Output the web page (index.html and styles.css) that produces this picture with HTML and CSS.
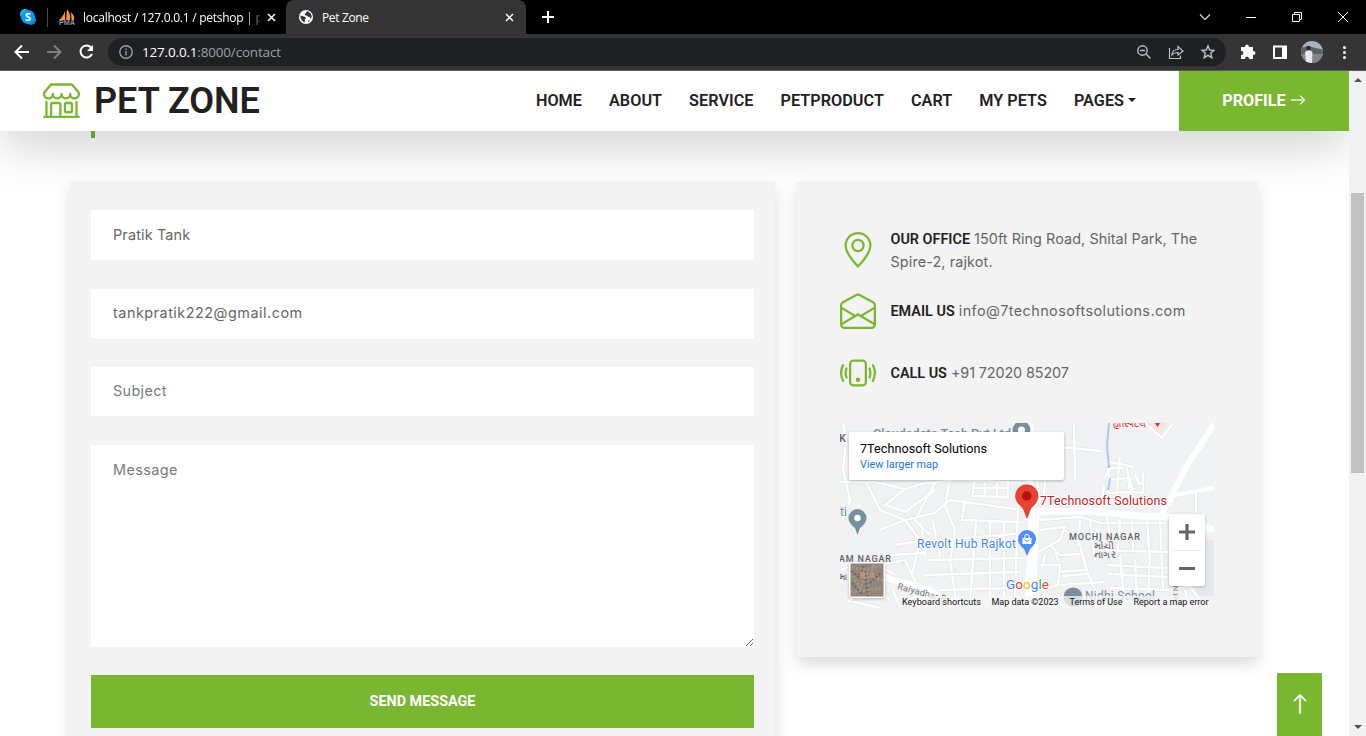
FILE: index.html
```html
<!DOCTYPE html>
<html lang="en">
<head>
<meta charset="utf-8">
<title>Pet Zone</title>
<link rel="stylesheet" href="styles.css">
</head>
<body>
<div class="tabs">
  <svg class="skype" viewBox="0 0 16 16"><circle cx="5" cy="5" r="5" fill="#1bb2f5"/><circle cx="11" cy="11" r="5" fill="#0a7fe0"/><circle cx="8" cy="8" r="7" fill="#0c9bea"/><text x="8" y="12" text-anchor="middle" font-size="11" font-weight="700" font-family="Open Sans, sans-serif" fill="#fff">S</text></svg>
  <i class="tab-sep"></i>
  <div class="tab tab-back">
    <svg width="18" height="17" viewBox="0 0 18 17"><path d="M7 2 7 11 1 11Q5 8 7 2ZM9 0Q13 5 12 11L8 11ZM13 3Q17 7 16 11L13.500 11Z" fill="#f29a25"/><text x="1" y="16" font-size="7" font-weight="700" font-family="Liberation Sans, sans-serif" fill="#8d8fb3" textLength="16" lengthAdjust="spacingAndGlyphs">PMA</text></svg>
    <span class="tab-title">localhost / 127.0.0.1 / petshop | p</span>
    <svg class="x" width="9" height="9" viewBox="0 0 9 9"><path d="M1 1 8 8M8 1 1 8" stroke="#fff" stroke-width="1.5"/></svg>
  </div>
  <div class="tab tab-on">
    <svg width="14" height="14" viewBox="0 0 14 14"><circle cx="7" cy="7" r="7" fill="#fff"/><path d="M1.2 5.5 5 6.6Q7 7 7 8.5L5.8 9.2 5.8 12.4Q1.5 11 1.2 5.5ZM7.5 1.3Q7.8 3.5 5.5 3.8 5.3 5.7 8 5.7 9 7 10.5 7L12 9Q14.2 4 9 1.4ZM9 12.7 9.5 10.5 11 10.2Z" fill="#35363a"/></svg>
    <span class="tab-title">Pet Zone</span>
    <svg class="x" width="9" height="9" viewBox="0 0 9 9"><path d="M1 1 8 8M8 1 1 8" stroke="#fff" stroke-width="1.5"/></svg>
  </div>
  <svg class="plus" width="12" height="12" viewBox="0 0 12 12"><path d="M6 0V12M0 6H12" stroke="#fff" stroke-width="2"/></svg>
  <svg class="win" width="152" height="14" viewBox="1198 7 152 14" fill="none" stroke="#fff"><path d="M1200 11.500 1205 16.500 1210 11.500" stroke="#ddd" stroke-width="1.200"/><path d="M1246 14.500H1256M1292.500 11.500H1299.500V18.500H1292.500ZM1294.500 11.500V9.500H1301.500V16.500H1299.500M1338 9 1348 19M1348 9 1338 19"/></svg>
</div>
<div class="toolbar">
  <svg width="82" height="16" viewBox="14 44 82 16" fill="none" stroke-width="2"><path d="M29 52H16M22 45.500 15.500 52 22 58.500" stroke="#fff"/><path d="M47 52H60M54 45.500 60.500 52 54 58.500" stroke="#7f7f80"/><path d="M91 47.500A6 6 0 1 0 92 54" stroke="#fff"/><path d="M93 45V51H87Z" fill="#fff"/></svg>
  <div class="omnibox">
    <svg width="14" height="14" viewBox="0 0 14 14" fill="none" stroke="#9aa0a6" stroke-width="1.400"><circle cx="7" cy="7" r="6.200"/><path d="M7 6V10.500M7 3.500V5"/></svg>
    <span class="url"><b>127.0.0.1</b>:8000/contact</span>
    <svg class="omni-icons" width="78" height="16" viewBox="1137 44 78 16" fill="none" stroke="#bdc1c6" stroke-width="1.400"><circle cx="1142.500" cy="50.500" r="4.700"/><path d="M1140 50.500H1145M1146 54 1150.500 58.500"/><path d="M1169.500 48V58.500H1180.500V55.500M1172 55Q1172 49.500 1178 49.500V46.500L1183 51 1178 55V52.500Q1174 52.500 1172 55Z" stroke-width="1.200"/><path d="M1208 45.800 1209.700 50 1214 50.300 1210.700 53.200 1211.800 57.700 1208 55.300 1204.200 57.700 1205.300 53.200 1202 50.300 1206.300 50Z"/></svg>
  </div>
  <svg class="ext" width="112" height="24" viewBox="1240 40 112 24"><path d="M1241 47H1245Q1245 44.500 1247 44.500T1249 47H1253V51Q1255.500 51 1255.500 53T1253 55V59H1249.200Q1249 56.500 1247 56.500T1244.800 59H1241V55.200Q1243.500 55 1243.500 53T1241 50.800Z" fill="#fff"/><path d="M1274 46.500H1286V58H1274Z" fill="none" stroke="#fff" stroke-width="2"/><path d="M1282 46H1287V59H1282Z" fill="#fff"/><clipPath id="av"><circle cx="1312" cy="52" r="11"/></clipPath><g clip-path="url(#av)"><path d="M1300 40H1324V64H1300Z" fill="#a7b4c4"/><path d="M1300 48 1308 46 1324 50V54H1300Z" fill="#53695c"/><path d="M1300 54H1324V64H1300Z" fill="#85858a"/><path d="M1305 52Q1309 48.500 1312.500 52L1312 63H1306Z" fill="#e9e4f0"/><circle cx="1308.500" cy="48" r="2.300" fill="#2a2634"/></g><g fill="#fff"><circle cx="1344.500" cy="47.500" r="1.500"/><circle cx="1344.500" cy="52.500" r="1.500"/><circle cx="1344.500" cy="57.500" r="1.500"/></g></svg>
</div>
<div class="viewport">
  <div class="page">
    <nav class="navbar">
      <svg class="shop" viewBox="0 0 16 16"><path d="M2.970 1.350A1 1 0 0 1 3.730 1h8.540a1 1 0 0 1 .76.35l2.609 3.044A1.500 1.500 0 0 1 16 5.370v.255a2.375 2.375 0 0 1-4.250 1.458A2.371 2.371 0 0 1 9.875 8 2.370 2.370 0 0 1 8 7.083 2.370 2.370 0 0 1 6.125 8a2.370 2.370 0 0 1-1.875-.917A2.375 2.375 0 0 1 0 5.625V5.370a1.500 1.500 0 0 1 .361-.976l2.610-3.045zm1.780 4.275a1.375 1.375 0 0 0 2.750 0 .5.5 0 0 1 1 0 1.375 1.375 0 0 0 2.750 0 .5.5 0 0 1 1 0 1.375 1.375 0 1 0 2.750 0V5.370a.5.5 0 0 0-.12-.325L12.270 2H3.730L1.120 5.045A.5.5 0 0 0 1 5.370v.255a1.375 1.375 0 0 0 2.750 0 .5.5 0 0 1 1 0zM1.500 8.500A.5.5 0 0 1 2 9v6h1v-5a1 1 0 0 1 1-1h3a1 1 0 0 1 1 1v5h6V9a.5.5 0 0 1 1 0v6h.5a.5.5 0 0 1 0 1H.5a.5.5 0 0 1 0-1H1V9a.5.5 0 0 1 .5-.5zM4 15h3v-5H4v5zm5-5a1 1 0 0 1 1-1h2a1 1 0 0 1 1 1v3a1 1 0 0 1-1 1h-2a1 1 0 0 1-1-1v-3zm3 0h-2v3h2v-3z"/></svg>
      <h1>PET ZONE</h1>
      <div class="links"><a>HOME</a><a>ABOUT</a><a>SERVICE</a><a>PETPRODUCT</a><a>CART</a><a>MY PETS</a><a class="drop">PAGES</a></div>
      <a class="profile">PROFILE <svg width="16" height="16" viewBox="0 0 16 16"><path d="M1 8a.5.5 0 0 1 .5-.5h11.793l-3.147-3.146a.5.5 0 0 1 .708-.708l4 4a.5.5 0 0 1 0 .708l-4 4a.5.5 0 0 1-.708-.708L13.293 8.500H1.500A.5.5 0 0 1 1 8z" stroke="#fff" stroke-width=".3"/></svg></a>
    </nav>
    <div class="heading-rule"></div>
    <main class="cols">
      <form class="card form">
        <input type="text" value="Pratik Tank" class="in-name">
        <input type="text" value="tankpratik222@gmail.com" class="in-mail">
        <input type="text" placeholder="Subject" class="in-subject">
        <textarea placeholder="Message"></textarea>
        <button type="button">SEND MESSAGE</button>
      </form>
      <aside class="card info">
        <div class="row row-office">
          <svg class="ico" viewBox="0 0 16 16"><path d="M12.166 8.940c-.524 1.062-1.234 2.120-1.960 3.070A31.493 31.493 0 0 1 8 14.580a31.481 31.481 0 0 1-2.206-2.570c-.726-.95-1.436-2.008-1.960-3.070C3.304 7.867 3 6.862 3 6a5 5 0 0 1 10 0c0 .862-.305 1.867-.834 2.940zM8 16s6-5.686 6-10A6 6 0 0 0 2 6c0 4.314 6 10 6 10z"/><path d="M8 8a2 2 0 1 1 0-4 2 2 0 0 1 0 4zm0 1a3 3 0 1 0 0-6 3 3 0 0 0 0 6z"/></svg>
          <p><b>OUR OFFICE</b> <span class="t-addr">150ft Ring Road, Shital Park, The</span><br><span class="t-addr2">Spire-2, rajkot.</span></p>
        </div>
        <div class="row row-mail">
          <svg class="ico" viewBox="0 0 16 16"><path d="M8.470 1.318a1 1 0 0 0-.94 0l-6 3.200A1 1 0 0 0 1 5.400v.817l5.750 3.450L8 8.917l1.250.75L15 6.217V5.400a1 1 0 0 0-.53-.882l-6-3.200ZM15 7.383l-4.778 2.867L15 13.117V7.383Zm-.035 6.880L8 10.082l-6.965 4.180A1 1 0 0 0 2 15h12a1 1 0 0 0 .965-.738ZM1 13.116l4.778-2.867L1 7.383v5.734ZM7.059.435a2 2 0 0 1 1.882 0l6 3.200A2 2 0 0 1 16 5.400V14a2 2 0 0 1-2 2H2a2 2 0 0 1-2-2V5.400a2 2 0 0 1 1.059-1.765l6-3.200Z"/></svg>
          <p><b>EMAIL US</b> <span class="t-mail">info@7technosoftsolutions.com</span></p>
        </div>
        <div class="row row-call">
          <svg class="ico" viewBox="0 0 16 16"><path d="M10 3a1 1 0 0 1 1 1v8a1 1 0 0 1-1 1H6a1 1 0 0 1-1-1V4a1 1 0 0 1 1-1h4zM6 2a2 2 0 0 0-2 2v8a2 2 0 0 0 2 2h4a2 2 0 0 0 2-2V4a2 2 0 0 0-2-2H6z"/><path d="M8 12a1 1 0 1 0 0-2 1 1 0 0 0 0 2zM1.599 4.058a.5.5 0 0 1 .208.676A6.967 6.967 0 0 0 1 8c0 1.180.292 2.292.807 3.266a.5.5 0 0 1-.884.468A7.968 7.968 0 0 1 0 8c0-1.347.334-2.619.923-3.734a.5.5 0 0 1 .676-.208zm12.802 0a.5.5 0 0 1 .676.208A7.967 7.967 0 0 1 16 8a7.967 7.967 0 0 1-.923 3.734.5.5 0 0 1-.884-.468A6.967 6.967 0 0 0 15 8c0-1.180-.292-2.292-.807-3.266a.5.5 0 0 1 .208-.676zM3.057 5.534a.5.5 0 0 1 .284.648A4.986 4.986 0 0 0 3 8c0 .642.12 1.255.34 1.818a.5.5 0 1 1-.93.364A5.986 5.986 0 0 1 2 8c0-.769.145-1.505.41-2.182a.5.5 0 0 1 .647-.284zm9.886 0a.5.5 0 0 1 .648.284C13.855 6.495 14 7.231 14 8c0 .769-.145 1.505-.41 2.182a.5.5 0 0 1-.93-.364C12.880 9.255 13 8.642 13 8c0-.642-.12-1.255-.34-1.818a.5.5 0 0 1 .283-.648z"/></svg>
          <p><b>CALL US</b> <span class="t-call">+91 72020 85207</span></p>
        </div>
        <svg class="map" width="374" height="185" viewBox="840 423 374 185" font-family="Roboto, sans-serif">
          <rect x="840" y="423" width="374" height="185" fill="#f0f1f3"/>
          <path d="M1190 540H1214V608H1198Z" fill="#e6e7ec"/>
          <path d="M1146 423 1168 423 1160 435Z" fill="#fce4e4"/>
          <g fill="none" stroke="#dfe1e5" stroke-width="3.400"><use href="#lanes"/></g>
          <g fill="none" stroke="#fff" stroke-width="2.400"><path id="lanes" d="M843 423 846 440 843 470 850 500 842 520M840 482 875 482 905 489 925 483 960 480 1030 483M866 482 880 510 905 520 920 540 912 575M905 489 885 505 905 512 935 490M880 530 905 520 935 513 950 500 1030 511M935 483 915 520 930 535M950 480 945 505 955 530 950 560 957 608M975 480 972 496 1008 497 1008 480M985 483V496M997 483V496M972 488H1008M965 500 962 520 1020 522M976 522 970 600M990 522V600M1004 522V600M1018 505 1015 600M945 540 1025 533M930 560 1025 558M925 575 1020 572M940 590 1020 588M880 565 905 560 912 575 925 600 945 608M895 545 925 540M890 555 925 553M850 600 870 585 890 600M840 570 870 560 895 575M921 523 925 557M933 522 940 556M846 600 880 608M893 590 900 608M1074 423 1075 480M1060 447 1101 451M1104 480 1109 468 1123 468M1120 454 1117 490M1109 468 1108 493 1133 492 1143 493V473M1107 480 1128 478M1130 477 1133 492M1135 474 1139 484 1143 483M1110 462 1134 467M1127 468 1130 492M1037 480 1040 500M1045 480 1043 508M1104 485 1101 510M1145 423 1162 438 1173 423M1168 500 1184 493 1196 493V513M1171 507 1174 495M1038 520 1080 517 1100 523 1165 523M1040 530 1065 527 1060 540 1038 552M1045 555 1042 568M1055 550 1058 560M1040 565 1060 565 1058 585 1040 590M1065 530 1080 545 1086 570 1058 572M1080 520 1078 545M1090 520 1095 560M1107 518 1112 550M1120 520 1118 550M1132 520 1133 550M1147 520 1150 560M1160 520 1163 590M1050 545 1060 555 1083 554 1088 574 1062 576M1100 550 1170 552M1107 565 1166 568M1109 574 1168 577M1088 574 1100 600M1120 555 1124 600M1135 560 1137 600M1150 556 1148 600M1060 585 1105 582M1045 590 1042 608M1110 588 1169 590M1170 590 1190 586 1200 600M1185 590 1190 608"/></g>
          <g fill="none" stroke="#fff"><path d="M1030 423V515" stroke-width="7"/><path d="M1034 510 1030 608" stroke-width="11"/><path d="M1025 512 1090 511 1140 516 1170 517 1214 530" stroke-width="7"/><path d="M1160 517 1188 464 1214 424" stroke-width="6"/><path d="M1170 496 1214 488" stroke-width="4"/><path d="M880 576 930 590 950 605" stroke-width="6"/></g>
          <path d="M1109 423 1107 445 1109 468M1110 478 1108 490" fill="none" stroke="#a9c8f5" stroke-width="2"/>
          <g fill="#78909c"><text x="873" y="438" font-size="12.500" font-weight="500" textLength="138">Cloudedata Tech Pvt Ltd</text><text x="840" y="516" font-size="12">ti</text><text x="1085" y="600" font-size="12" textLength="70">Nidhi School</text></g>
          <g fill="#5f6368" font-weight="500"><text x="839" y="442" font-size="11">K</text><text x="839" y="562" font-size="9" textLength="52">AM NAGAR</text><text x="1069" y="540" font-size="9" textLength="71">MOCHI NAGAR</text><text x="1094" y="549" font-size="9" textLength="20" lengthAdjust="spacingAndGlyphs">મોચી</text><text x="1094" y="558" font-size="9" textLength="22" lengthAdjust="spacingAndGlyphs">નાગર</text><text x="839" y="580" font-size="9">મા</text></g>
          <text x="1113" y="427" font-size="10" fill="#d93025" textLength="33" lengthAdjust="spacingAndGlyphs">હોસ્પિટલ</text><path d="M1155 423h5l-2.500 4Z" fill="#d93025"/>
          <text x="897" y="589" font-size="9" fill="#70757a" transform="rotate(15 897 589)" textLength="50">Raiyadhar R</text>
          <text x="0" y="0" font-size="8" fill="#80868b" transform="translate(1178 600) rotate(-90)">et N</text>
          <g fill="#78909c"><circle cx="1021.500" cy="430" r="9"/><circle cx="1073" cy="597" r="9.500"/><path d="M848.500 518A9 9 0 1 1 866.500 518Q866.500 523 860 528L857.500 535 855 528Q848.500 523 848.500 518Z"/></g><g fill="#fff"><circle cx="1021.500" cy="430" r="3.500"/><circle cx="857.500" cy="518" r="3.200"/></g>
          <path d="M1015.500 496A11 11 0 0 1 1038 496Q1038 502 1031 508L1027 518 1023 508Q1015.500 502 1015.500 496Z" fill="#ea4335" stroke="#c5221f" stroke-width=".6"/><circle cx="1026.700" cy="496" r="4.700" fill="#b31412"/>
          <path d="M1018 539A9 9 0 0 1 1036 539Q1036 544 1030 549L1027 556 1024 549Q1018 544 1018 539Z" fill="#4f90f5"/><path d="M1022.500 538H1031.500V544H1022.500Z" fill="#fff"/><path d="M1024.800 538V536.500A2.200 2.200 0 0 1 1029.200 536.500V538" fill="none" stroke="#fff"/><path d="M1024.500 539.500Q1027 543 1029.500 539.500" fill="none" stroke="#4f90f5"/>
          <text x="1040" y="505" font-size="12.500" fill="#c5221f" stroke="#fff" stroke-width="2" paint-order="stroke" textLength="127">7Technosoft Solutions</text>
          <text x="917" y="548" font-size="12" fill="#4285f4" stroke="#fff" stroke-width="2" paint-order="stroke" textLength="99">Revolt Hub Rajkot</text>
          <rect x="898" y="596" width="316" height="12" fill="#f5f5f5" opacity=".75"/>
          <g class="lift"><rect x="849" y="432" width="215" height="48" rx="2" fill="#fff"/><rect x="1169" y="514" width="36" height="72" rx="2" fill="#fff"/><rect x="849" y="562" width="36" height="36" rx="3" fill="#fff"/></g>
          <text x="860" y="453" font-size="12.600" font-weight="400" fill="#000" textLength="127">7Technosoft Solutions</text>
          <text x="860" y="468" font-size="10.800" fill="#1a73e8" textLength="78">View larger map</text>
          <rect x="850.500" y="563.500" width="33" height="33" fill="#91857a"/><g fill="none"><path d="M852 567 862 570 881 566M853 576 860 588 867 574 869 594M851 592 881 588M874 565 870 577 883 580" stroke="#a5978a" stroke-width="3" stroke-dasharray="2 2"/><path d="M851 571 859 577 864 564M865 571 868 596M870 583 881 573M852 583 862 594" stroke="#6e665d" stroke-width="2" stroke-dasharray="2 2"/></g><path d="M860 572H865V578H860ZM870 572H874V577H870Z" fill="#c5906e"/>
          <path d="M1179 532H1195M1187 524V540M1179 568.500H1195" stroke="#666" stroke-width="3.200"/><path d="M1174 550.500H1201" stroke="#e6e6e6"/>
          <text x="1006" y="589" font-size="13.500" font-weight="400" textLength="43" stroke="#fff" stroke-width="1.500" paint-order="stroke"><tspan fill="#4285f4">G</tspan><tspan fill="#ea4335">o</tspan><tspan fill="#fbbc04">o</tspan><tspan fill="#4285f4">g</tspan><tspan fill="#34a853">l</tspan><tspan fill="#ea4335">e</tspan></text>
          <g font-size="9" fill="#111"><text x="902" y="605" textLength="79">Keyboard shortcuts</text><text x="991.500" y="605" textLength="67">Map data ©2023</text><text x="1069.500" y="605" textLength="53">Terms of Use</text><text x="1133.500" y="605" textLength="75">Report a map error</text></g>
        </svg>
      </aside>
    </main>
    <a class="to-top"><svg width="22" height="22" viewBox="0 0 16 16"><path d="M8 15a.5.5 0 0 0 .5-.5V2.707l3.146 3.147a.5.5 0 0 0 .708-.708l-4-4a.5.5 0 0 0-.708 0l-4 4a.5.5 0 1 0 .708.708L7.500 2.707V14.500a.5.5 0 0 0 .5.5z" stroke="#fff" stroke-width=".4"/></svg></a>
  </div>
  <div class="scrollbar"><i class="up"></i><i class="thumb"></i><i class="down"></i></div>
</div>
</body>
</html>
```
FILE: styles.css
```css
* { box-sizing: border-box; }
body { margin: 0; width: 1366px; height: 736px; overflow: hidden; background: #fff; font-family: Roboto, sans-serif; }
svg { display: block; flex: none; }

.tabs { display: flex; align-items: center; height: 34px; background: #000; font: 12px "Open Sans", sans-serif; color: #fff; }
.skype { width: 16px; height: 16px; margin-left: 20px; }
.tab-sep { width: 1px; height: 19px; margin-left: 11px; background: #4a4a4a; }
.tab { display: flex; align-items: center; height: 34px; }
.tab-back { width: 238px; padding: 0 10px; border-radius: 0 0 8px 0; }
.tab-back .tab-title { width: 177px; margin-left: 7px; letter-spacing: -.25px; overflow: hidden; white-space: nowrap; -webkit-mask-image: linear-gradient(90deg, #000 162px, transparent 182px); }
.tab-on { width: 240px; padding: 0 12px 0 13px; border-radius: 8px 8px 0 0; background: #353535; }
.tab-on .tab-title { margin-left: 9px; letter-spacing: -.35px; }
.tab .x { margin-left: auto; }
.plus { margin-left: 16px; }
.win { margin-left: auto; margin-right: 16px; }

.toolbar { display: flex; align-items: center; height: 37px; padding: 0 14px 1px; background: #353535; border-bottom: 1px solid #5a5a5a; }
.omnibox { display: flex; align-items: center; width: 1118px; height: 28px; margin-left: 12px; padding: 0 11px; border-radius: 14px; background: #202124; }
.url { margin-left: 9px; font: 13.5px "Open Sans", sans-serif; letter-spacing: -.18px; color: #9aa0a6; }
.url b { font-weight: 400; color: #fff; }
.omni-icons { margin-left: auto; }
.ext { margin-left: 14px; }

.viewport { display: flex; height: 665px; }
.page { position: relative; width: 1349px; height: 665px; overflow: hidden; }
.navbar { position: relative; z-index: 2; display: flex; align-items: center; height: 60px; padding-left: 43px; background: #fff; box-shadow: 0 16px 48px rgba(0,0,0,.175); }
.shop { width: 37px; height: 37px; margin-bottom: 3px; fill: #7ab730; }
h1 { margin: 0 0 0 14px; font-size: 36px; font-weight: 600; line-height: 60px; color: #212121; letter-spacing: 0; white-space: nowrap; }
.links { display: flex; gap: 27px; margin-left: auto; margin-right: 43px; padding-bottom: 2px; font-size: 16.2px; font-weight: 600; letter-spacing: .05px; color: #212121; }
.drop { display: flex; align-items: center; gap: 4px; }
.drop::after { content: ""; border: 4.500px solid transparent; border-top-color: #212121; border-bottom: 0; }
.profile { display: flex; align-items: center; justify-content: center; gap: 4px; width: 170px; height: 60px; padding-bottom: 2px; background: #7ab730; color: #fff; fill: #fff; font-size: 16.2px; font-weight: 700; }
.heading-rule { width: 4px; height: 7px; margin-left: 91px; background: #7ab730; }
.cols { display: flex; align-items: flex-start; gap: 22px; margin: 44px 0 0 70px; }
.card { background: #f3f3f3; box-shadow: 0 7px 15px rgba(0,0,0,.15); }

.form { display: flex; flex-direction: column; width: 705px; height: 574px; padding: 28px 21px 0; }
input, textarea { display: block; width: 100%; height: 49px; margin: 0 0 29px; padding: 0 22px 2px; border: 0; border-radius: 0; outline: 0; background: #fff; color: #666; font: 400 14.4px Inter, sans-serif; }
input.in-name { height: 50px; }
.in-name { letter-spacing: .15px; }
.in-mail { letter-spacing: .51px; }
.in-subject { letter-spacing: .35px; }
textarea { height: 202px; padding-top: 16px; margin-bottom: 28px; resize: vertical; letter-spacing: .4px; }
::placeholder { color: #757b81; }
button { height: 53px; border: 0; background: #7ab730; color: #fff; font: 700 14.4px Roboto, sans-serif; }

.info { width: 461px; height: 475px; padding: 46px 43px 0; }
.row { display: flex; align-items: center; }
.ico { width: 36px; height: 36px; fill: #7ab730; }
.row p { margin: 0 0 0 14.500px; font: 400 14.400px/22px Inter, sans-serif; color: #666; white-space: nowrap; }
.row b { font: 600 14.400px/22px Roboto, sans-serif; color: #212121; letter-spacing: 0; }
.t-addr { letter-spacing: .06px; }
.t-addr2 { letter-spacing: .12px; }
.t-mail { letter-spacing: .42px; }
.t-call { letter-spacing: -.12px; }
.row-office { height: 44px; margin-bottom: 21px; }
.row-mail { height: 36px; margin-bottom: 26px; }
.row-mail p, .row-call p { padding-top: 1px; }
.row-call { height: 36px; }
.map { margin-top: 32px; }
.lift { filter: drop-shadow(0 1px 1.500px rgba(0,0,0,.25)); }

.to-top { position: absolute; right: 27px; bottom: 0; display: flex; align-items: center; justify-content: center; width: 45px; height: 63px; padding-bottom: 2px; background: #7ab730; fill: #fff; }
.scrollbar { display: flex; flex-direction: column; align-items: center; width: 17px; background: #f1f1f1; }
.up { margin-top: 7px; border: 4px solid transparent; border-bottom-color: #505050; border-top: 0; }
.thumb { width: 13px; height: 280px; margin-top: 111px; background: #c1c1c1; }
.down { margin-top: auto; margin-bottom: 7px; border: 4px solid transparent; border-top-color: #505050; border-bottom: 0; }
```
